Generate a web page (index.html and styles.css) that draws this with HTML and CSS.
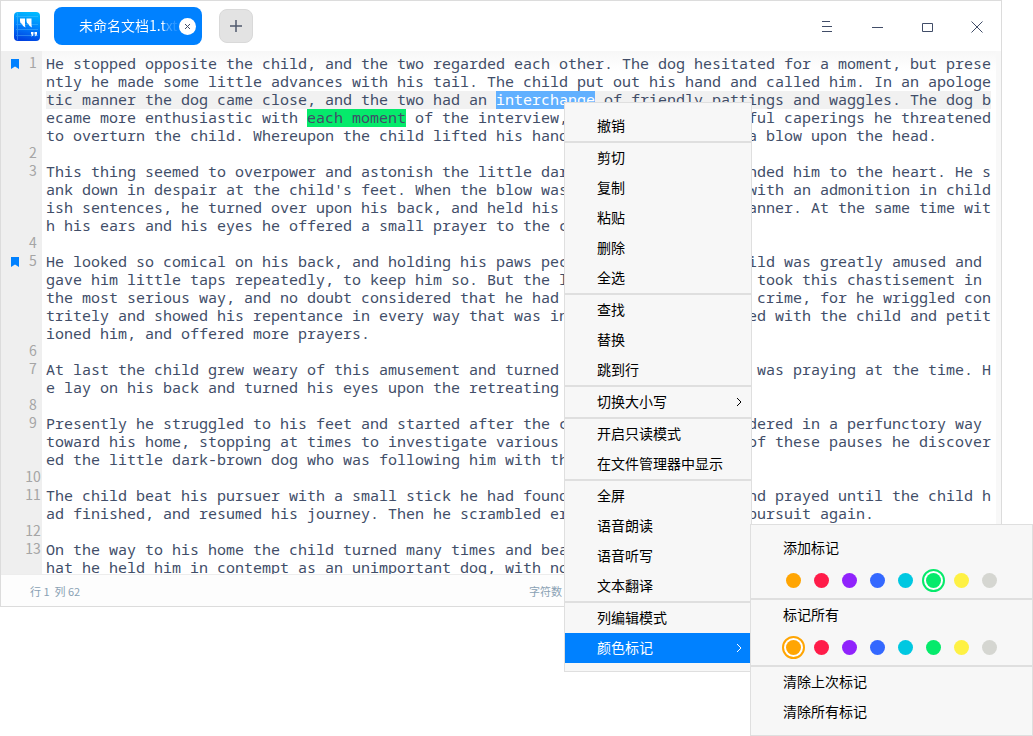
FILE: index.html
```
<!DOCTYPE html>
<html lang="zh-CN">
<head>
<meta charset="utf-8">
<title>未命名文档1.txt</title>
<link rel="stylesheet" href="styles.css">
</head>
<body>
<main class="window">
  <header class="titlebar">
    <svg class="logo" viewBox="0 0 26 29" aria-hidden="true">
      <defs><linearGradient id="lg" x1="0.6" y1="0" x2="0.4" y2="1"><stop offset="0" stop-color="#00baff"/><stop offset="0.5" stop-color="#0080fc"/><stop offset="1" stop-color="#0040e0"/></linearGradient></defs>
      <rect width="26" height="29" rx="4" fill="url(#lg)"/>
      <path d="M2 4.500H24M2 12.500H24M2 17.500H24M2 23.500H24M3.500 1V28" stroke="#6cd0ff" stroke-width="1" opacity=".35"/>
      <path d="M6 6.500H11V12Q11 14 11.500 15.500Q8.500 14.500 8 12Q6 11.500 6 9zM12.500 6.500H17.500V12Q17.500 14 18 15.500Q15 14.500 14.500 12Q12.500 11.500 12.500 9z" fill="#fff"/>
      <path d="M17 20h2.500v2Q19.500 24 17 24.500Q18 23.500 18 22.500H17zM20.500 20H23v2Q23 24 20.500 24.500Q21.500 23.500 21.500 22.500H20.500z" fill="#fff"/>
    </svg>
    <div class="tab">
      <span class="tab-name">未命名文档1.txt</span>
      <button class="tab-close" aria-label="关闭标签"><svg viewBox="0 0 17 17"><path d="M6 6l5 5M11 6l-5 5" stroke="#414d68"/></svg></button>
    </div>
    <button class="add" aria-label="新建标签"><svg viewBox="0 0 14 14"><path d="M1 7H13M7 1V13" stroke="#505a6e" stroke-width="1.500"/></svg></button>
    <nav class="controls">
      <button aria-label="菜单"><svg viewBox="0 0 14 14"><path d="M3 2.500H11M3 7.500H13M3 12.500H13" stroke="#414d68"/></svg></button>
      <button aria-label="最小化"><svg viewBox="0 0 14 14"><path d="M3 8.500H14" stroke="#414d68"/></svg></button>
      <button aria-label="最大化"><svg viewBox="0 0 14 14"><path d="M3.500 4.500H13.500V12.500H3.500z" fill="none" stroke="#414d68"/></svg></button>
      <button aria-label="关闭"><svg viewBox="0 0 14 14"><path d="M2.500 2.500L13.500 13.500M13.500 2.500L2.500 13.500" stroke="#414d68"/></svg></button>
    </nav>
  </header>
  <section class="editor">
    <div class="row"><div class="gutter"><svg class="mark" viewBox="0 0 8 10"><path d="M0 0H8V10L4 7.500L0 10z"/></svg><span>1</span></div><div class="text">He stopped opposite the child, and the two regarded each other. The dog hesitated for a moment, but prese
ntly he made some little advances with his tail. The child put out his hand and called him. In an apologe
<span class="current">tic manner the dog came close, and the two had an <span class="selected">interchange</span> of friendly pattings and waggles. The dog b</span>
ecame more enthusiastic with <span class="found">each moment</span> of the interview, until with his gleeful caperings he threatened 
to overturn the child. Whereupon the child lifted his hand and struck the dog a blow upon the head.</div></div>
    <div class="row"><div class="gutter"><span>2</span></div><div class="text"></div></div>
    <div class="row"><div class="gutter"><span>3</span></div><div class="text">This thing seemed to overpower and astonish the little dark-brown dog, and wounded him to the heart. He s
ank down in despair at the child's feet. When the blow was repeated, together with an admonition in child
ish sentences, he turned over upon his back, and held his paws in a peculiar manner. At the same time wit
h his ears and his eyes he offered a small prayer to the child.</div></div>
    <div class="row"><div class="gutter"><span>4</span></div><div class="text"></div></div>
    <div class="row"><div class="gutter"><svg class="mark" viewBox="0 0 8 10"><path d="M0 0H8V10L4 7.500L0 10z"/></svg><span>5</span></div><div class="text">He looked so comical on his back, and holding his paws peculiarly, that the child was greatly amused and 
gave him little taps repeatedly, to keep him so. But the little dark-brown dog took this chastisement in 
the most serious way, and no doubt considered that he had committed some grave crime, for he wriggled con
tritely and showed his repentance in every way that was in his power. He pleaded with the child and petit
ioned him, and offered more prayers.</div></div>
    <div class="row"><div class="gutter"><span>6</span></div><div class="text"></div></div>
    <div class="row"><div class="gutter"><span>7</span></div><div class="text">At last the child grew weary of this amusement and turned toward home. The dog was praying at the time. H
e lay on his back and turned his eyes upon the retreating form.</div></div>
    <div class="row"><div class="gutter"><span>8</span></div><div class="text"></div></div>
    <div class="row"><div class="gutter"><span>9</span></div><div class="text">Presently he struggled to his feet and started after the child. The latter wandered in a perfunctory way 
toward his home, stopping at times to investigate various matters. During one of these pauses he discover
ed the little dark-brown dog who was following him with the air of a footpad.</div></div>
    <div class="row"><div class="gutter"><span>10</span></div><div class="text"></div></div>
    <div class="row"><div class="gutter"><span>11</span></div><div class="text">The child beat his pursuer with a small stick he had found. The dog lay down and prayed until the child h
ad finished, and resumed his journey. Then he scrambled erect and took up the pursuit again.</div></div>
    <div class="row"><div class="gutter"><span>12</span></div><div class="text"></div></div>
    <div class="row"><div class="gutter"><span>13</span></div><div class="text">On the way to his home the child turned many times and beat the dog, proclaiming with childish gestures t
hat he held him in contempt as an unimportant dog, with no value save for a moment.</div></div>
  </section>
  <footer class="status"><span>行 1&nbsp; 列 62</span><span class="count">字符数</span></footer>
</main>

<div class="menu context" role="menu">
  <div class="group"><button>撤销</button></div>
  <div class="group"><button>剪切</button><button>复制</button><button>粘贴</button><button>删除</button><button>全选</button></div>
  <div class="group"><button>查找</button><button>替换</button><button>跳到行</button></div>
  <div class="group"><button>切换大小写<svg class="arrow" viewBox="0 0 6 10"><path d="M1 1L5 5L1 9"/></svg></button></div>
  <div class="group"><button>开启只读模式</button><button>在文件管理器中显示</button></div>
  <div class="group"><button>全屏</button><button>语音朗读</button><button>语音听写</button><button>文本翻译</button></div>
  <div class="group"><button>列编辑模式</button><button class="active">颜色标记<svg class="arrow" viewBox="0 0 6 10"><path d="M1 1L5 5L1 9"/></svg></button></div>
</div>

<div class="menu submenu" role="menu">
  <div class="group"><button>添加标记</button>
    <div class="dots"><button class="dot orange" aria-label="橙"></button><button class="dot red" aria-label="红"></button><button class="dot purple" aria-label="紫"></button><button class="dot blue" aria-label="蓝"></button><button class="dot cyan" aria-label="青"></button><button class="dot green ring" aria-label="绿"></button><button class="dot yellow" aria-label="黄"></button><button class="dot gray" aria-label="灰"></button></div>
  </div>
  <div class="group"><button>标记所有</button>
    <div class="dots"><button class="dot orange ring" aria-label="橙"></button><button class="dot red" aria-label="红"></button><button class="dot purple" aria-label="紫"></button><button class="dot blue" aria-label="蓝"></button><button class="dot cyan" aria-label="青"></button><button class="dot green" aria-label="绿"></button><button class="dot yellow" aria-label="黄"></button><button class="dot gray" aria-label="灰"></button></div>
  </div>
  <div class="group"><button>清除上次标记</button><button>清除所有标记</button></div>
</div>
</body>
</html>
```
FILE: styles.css
```
* { box-sizing: border-box; }
body {
  margin: 0;
  height: 100vh;
  padding: 0 31px 129px 0;
  background: #fff;
  overflow: hidden;
  font: 14px/20px "Noto Sans CJK SC", sans-serif;
}
button { margin: 0; padding: 0; border: 0; background: none; font: inherit; color: inherit; }
svg { display: block; overflow: visible; }

.window { display: flex; flex-direction: column; height: 100%; border: 1px solid #dcdcdc; background: #fff; }

.titlebar { flex: none; display: flex; align-items: center; height: 50px; padding-left: 13px; }
.logo { width: 26px; height: 29px; }
.tab { display: flex; align-items: center; width: 148px; height: 38px; margin-left: 14px; padding: 0 6px 0 25px; border-radius: 8px; background: #0081ff; color: #fff; }
.tab-name {
  flex: 1;
  padding-bottom: 2px;
  white-space: nowrap;
  overflow: hidden;
  background: linear-gradient(90deg, #fff 84px, rgba(255, 255, 255, .4) 87px, rgba(255, 255, 255, .1) 98px);
  -webkit-background-clip: text;
  background-clip: text;
  color: transparent;
}
.tab-close { width: 17px; height: 17px; border-radius: 50%; background: #fff; }
.tab-close svg { width: 17px; height: 17px; }
.add { display: grid; place-items: center; width: 34px; height: 34px; margin-left: 17px; border: 1px solid #d9d9d9; border-radius: 8px; background: #e3e3e3; }
.add svg { width: 14px; height: 14px; }
.controls { display: flex; margin-left: auto; }
.controls button { display: grid; place-items: center; width: 50px; height: 50px; }
.controls svg { width: 14px; height: 14px; }

.editor {
  flex: 1;
  min-height: 0;
  overflow: hidden;
  padding-top: 3px;
  background: linear-gradient(90deg, #efefef 41px, transparent 41px, transparent calc(100% - 5px), #f8f8f8 calc(100% - 5px)), linear-gradient(#f7f7f7, #fff 20px);
}
.row { display: flex; min-height: 18px; }
.gutter { flex: none; display: flex; align-items: center; justify-content: space-between; width: 41px; height: 18px; padding-left: 10px; color: #a5a5a5; line-height: 16px; }
.gutter span { width: 18px; margin-left: auto; padding-bottom: 2px; text-align: center; }
.mark { width: 8px; height: 10px; margin-top: 2px; fill: #0081ff; }
.text { flex: 1; min-width: 0; padding-left: 4px; white-space: pre; color: #414d68; font: 15px/18px "Noto Sans Mono", "DejaVu Sans Mono", monospace; }
.current, .selected, .found { background-repeat: no-repeat; background-position: 0 2px; background-size: 100% 18px; }
.current { background-image: linear-gradient(#f1f1f1, #f1f1f1); }
.selected { background-image: linear-gradient(#61b0ff, #61b0ff); color: #fff; }
.found { background-image: linear-gradient(#05ea6b, #05ea6b); }

.status { flex: none; display: flex; align-items: center; height: 32px; padding: 0 29px; border-top: 1px solid #ededed; background: #fdfdfd; color: #8aa1b4; font-size: 11px; }
.count { margin-left: auto; margin-right: 410px; }

.menu { position: absolute; padding: 8px 0; border: 1px solid #dfdfdf; background: #f7f7f7; color: #000; }
.context { left: 564px; top: 102px; width: 188px; }
.submenu { left: 750px; top: 524px; width: 283px; }
.group + .group { border-top: 2px solid #dfdfdf; }
.group > button { display: flex; align-items: center; justify-content: space-between; width: 100%; height: 30px; padding: 0 9px 3px 32px; }
.group > .active { background: #0081ff; color: #fff; }
.arrow { width: 6px; height: 10px; margin-top: 2px; fill: none; stroke: currentColor; }
.dots { display: flex; align-items: center; gap: 13px; height: 35px; padding-left: 35px; }
.dot { width: 15px; height: 15px; border-radius: 50%; background: currentColor; }
.ring { outline: 2px solid currentColor; outline-offset: 2px; box-shadow: 0 0 0 2px #fff; }
.orange { color: #ffa503; }
.red { color: #ff1c49; }
.purple { color: #9023fc; }
.blue { color: #3468ff; }
.cyan { color: #00c8e1; }
.green { color: #05ea6b; }
.yellow { color: #fef144; }
.gray { color: #d5d6d1; }
```
